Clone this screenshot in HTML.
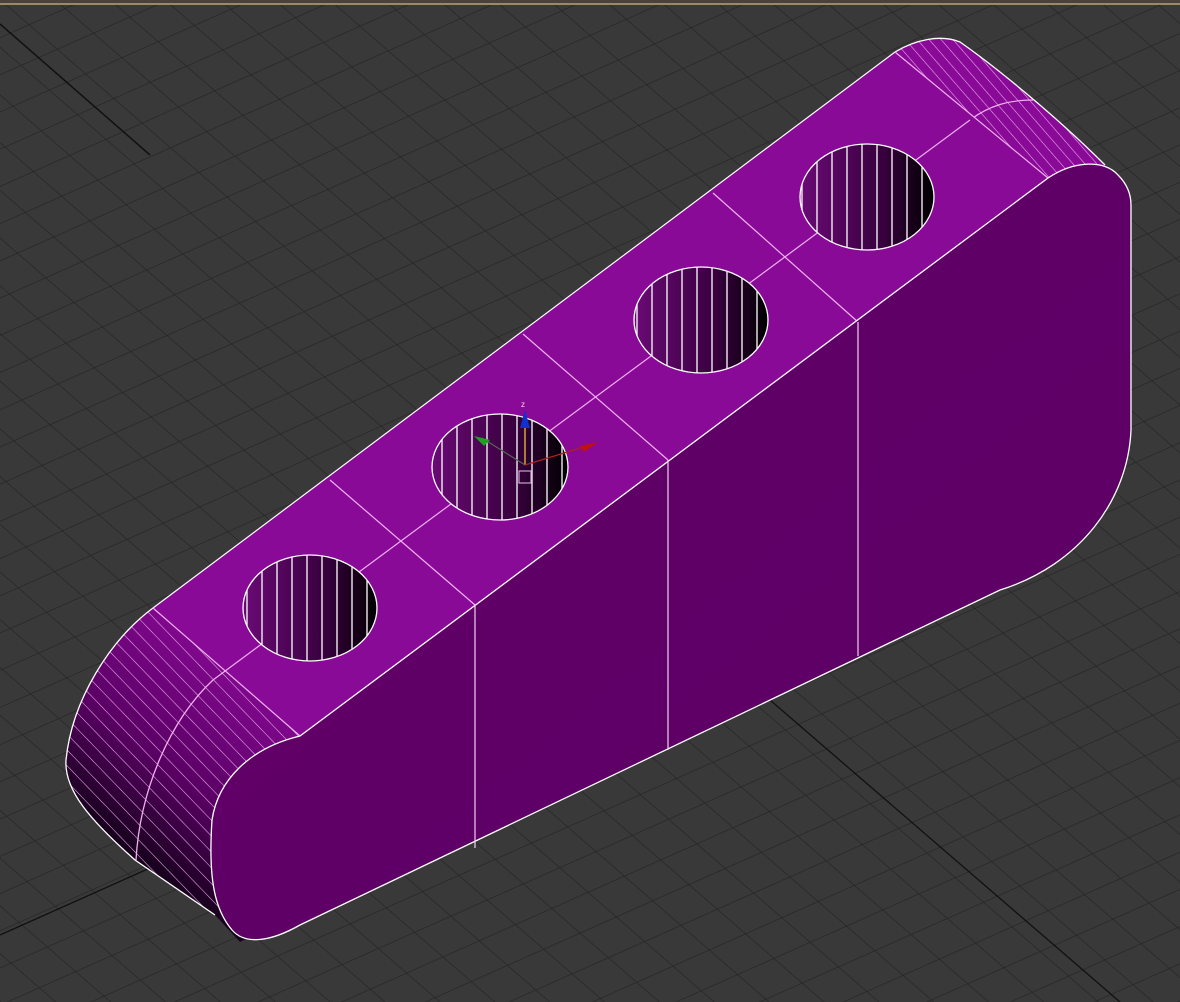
<!DOCTYPE html>
<html><head><meta charset="utf-8"><style>
html,body{margin:0;padding:0;background:#393939;}
svg{display:block}
</style></head><body>
<svg width="1180" height="1002" viewBox="0 0 1180 1002" xmlns="http://www.w3.org/2000/svg">
<defs>
<pattern id="ga" width="36" height="40" patternUnits="userSpaceOnUse" patternTransform="rotate(-49)">
<line x1="0" y1="0" x2="0" y2="40" stroke="#242424" stroke-width="1.3"/>
</pattern>
<pattern id="gb" width="34" height="40" patternUnits="userSpaceOnUse" patternTransform="rotate(66)">
<line x1="0" y1="0" x2="0" y2="40" stroke="#242424" stroke-width="1.3"/>
</pattern>
<pattern id="stripeL" width="11" height="40" patternUnits="userSpaceOnUse" patternTransform="rotate(-44)">
<line x1="0" y1="0" x2="0" y2="40" stroke="#f0b0f0" stroke-width="1.1"/>
</pattern>
<pattern id="stripeR" width="9" height="40" patternUnits="userSpaceOnUse" patternTransform="rotate(-41)">
<line x1="0" y1="0" x2="0" y2="40" stroke="#f0b0f0" stroke-width="1.1"/>
</pattern>
<pattern id="vs" width="15" height="40" patternUnits="userSpaceOnUse">
<line x1="7" y1="0" x2="7" y2="40" stroke="#fff" stroke-width="1.3"/>
</pattern>
<linearGradient id="holeG" x1="0" y1="0" x2="1" y2="0">
<stop offset="0" stop-color="#6a0a75"/><stop offset="0.6" stop-color="#3a0040"/><stop offset="1" stop-color="#000"/>
</linearGradient>
<linearGradient id="capL" x1="0.7" y1="0.1" x2="0.2" y2="0.9">
<stop offset="0" stop-color="#8a0a98"/><stop offset="0.5" stop-color="#5a0064"/><stop offset="0.8" stop-color="#1a0020"/><stop offset="1" stop-color="#000"/>
</linearGradient>
<linearGradient id="front" x1="0" y1="0" x2="1" y2="1">
<stop offset="0" stop-color="#620069"/><stop offset="1" stop-color="#5c0065"/>
</linearGradient>
</defs>
<rect width="1180" height="1002" fill="#393939"/>
<rect width="1180" height="1002" fill="url(#ga)"/>
<rect width="1180" height="1002" fill="url(#gb)"/>
<line x1="0" y1="24" x2="150" y2="155" stroke="#111" stroke-width="1.5"/>
<line x1="770" y1="700" x2="1120" y2="1002" stroke="#111" stroke-width="1.3"/>
<line x1="0" y1="935" x2="150" y2="868" stroke="#111" stroke-width="1.3"/>
<rect x="0" y="0" width="1180" height="3" fill="#4a4438"/>
<rect x="0" y="3" width="1180" height="2" fill="#9a8a68"/>

<clipPath id="clc"><path d="M153,608 C110,640 72,700 66,760 C64,790 90,820 135,860 L215,915 L240,942 L320,900 L320,736 L300,736 Z"/></clipPath>
<path d="M153,608 C110,640 72,700 66,760 C64,790 90,820 135,860 L215,915 L240,942 L320,900 L320,736 L300,736 Z" fill="url(#capL)"/>
<rect x="0" y="580" width="340" height="380" fill="url(#stripeL)" clip-path="url(#clc)"/>
<path d="M153,608 C110,640 72,700 66,760 C64,790 90,820 135,860 L215,915" fill="none" stroke="#fff" stroke-width="1.3"/>
<path d="M213,680 C170,720 140,790 136,860" fill="none" stroke="#f0b0f0" stroke-width="1.3"/>

<clipPath id="crc"><path d="M895,52 C915,40 940,34 960,42 C1000,70 1060,120 1105,165 L1060,200 L1048,178 Z"/></clipPath>
<path d="M895,52 C915,40 940,34 960,42 C1000,70 1060,120 1105,165 L1060,200 L1048,178 Z" fill="#8a0a98"/>
<rect x="880" y="30" width="240" height="180" fill="url(#stripeR)" clip-path="url(#crc)"/>
<path d="M895,52 C915,40 940,34 960,42 C1000,70 1060,120 1105,165" fill="none" stroke="#fff" stroke-width="1.3"/>
<path d="M970,120 C990,105 1010,100 1033,100" fill="none" stroke="#f0b0f0" stroke-width="1.2"/>

<path d="M153,608 L895,52 L1048,178 L300,736 Z" fill="#8a0a98"/>
<line x1="153" y1="608" x2="895" y2="52" stroke="#fff" stroke-width="1.2"/>
<g stroke="#f0b0f0" stroke-width="1.2">
<line x1="153" y1="608" x2="300" y2="736"/>
<line x1="330" y1="480" x2="475" y2="605"/>
<line x1="523" y1="334" x2="668" y2="460"/>
<line x1="713" y1="193" x2="858" y2="322"/>
<line x1="895" y1="52" x2="1048" y2="178"/>
<line x1="213" y1="680" x2="970" y2="120"/>
</g>

<g>
<clipPath id="h1"><ellipse cx="310" cy="608" rx="67" ry="53"/></clipPath>
<ellipse cx="310" cy="608" rx="67" ry="53" fill="url(#holeG)"/>
<rect x="240" y="550" width="140" height="120" fill="url(#vs)" clip-path="url(#h1)"/>
<ellipse cx="310" cy="608" rx="67" ry="53" fill="none" stroke="#fff" stroke-width="1.3"/>
<clipPath id="h2"><ellipse cx="500" cy="467" rx="68" ry="53"/></clipPath>
<ellipse cx="500" cy="467" rx="68" ry="53" fill="url(#holeG)"/>
<rect x="430" y="410" width="140" height="120" fill="url(#vs)" clip-path="url(#h2)"/>
<ellipse cx="500" cy="467" rx="68" ry="53" fill="none" stroke="#fff" stroke-width="1.3"/>
<clipPath id="h3"><ellipse cx="701" cy="320" rx="67" ry="53"/></clipPath>
<ellipse cx="701" cy="320" rx="67" ry="53" fill="url(#holeG)"/>
<rect x="630" y="265" width="140" height="120" fill="url(#vs)" clip-path="url(#h3)"/>
<ellipse cx="701" cy="320" rx="67" ry="53" fill="none" stroke="#fff" stroke-width="1.3"/>
<clipPath id="h4"><ellipse cx="867" cy="197" rx="67" ry="53"/></clipPath>
<ellipse cx="867" cy="197" rx="67" ry="53" fill="url(#holeG)"/>
<rect x="795" y="140" width="140" height="120" fill="url(#vs)" clip-path="url(#h4)"/>
<ellipse cx="867" cy="197" rx="67" ry="53" fill="none" stroke="#fff" stroke-width="1.3"/>
</g>

<path d="M300,736 L1048,178 C1075,160 1105,160 1118,175 C1128,185 1131,195 1131,205 L1131,430 C1128,500 1080,565 1000,590 L300,925 C270,942 245,945 232,930 C215,910 208,880 212,820 C218,780 250,748 300,736 Z" fill="url(#front)" stroke="#fff" stroke-width="1.3"/>
<g stroke="#f0d0f0" stroke-width="1.2">
<line x1="475" y1="605" x2="475" y2="848"/>
<line x1="668" y1="460" x2="668" y2="750"/>
<line x1="858" y1="322" x2="858" y2="656"/>
</g>

<g stroke-width="1.2" fill="none">
<line x1="525" y1="465" x2="525" y2="420" stroke="#ffd040"/>
<line x1="525" y1="465" x2="482" y2="438" stroke="#556655"/>
<line x1="525" y1="465" x2="590" y2="445" stroke="#aa2020"/>
<rect x="519" y="471" width="12" height="12" stroke="#d0a0d0"/>
</g>
<polygon points="525,410 520,428 530,428" fill="#1030d0"/>
<polygon points="474,436 490,440 484,446" fill="#20a020"/>
<polygon points="598,442 580,446 584,452" fill="#c01010"/>
<text x="521" y="407" font-family="Liberation Sans, sans-serif" font-size="8" fill="#ffd0d0">z</text>
</svg>
</body></html>
